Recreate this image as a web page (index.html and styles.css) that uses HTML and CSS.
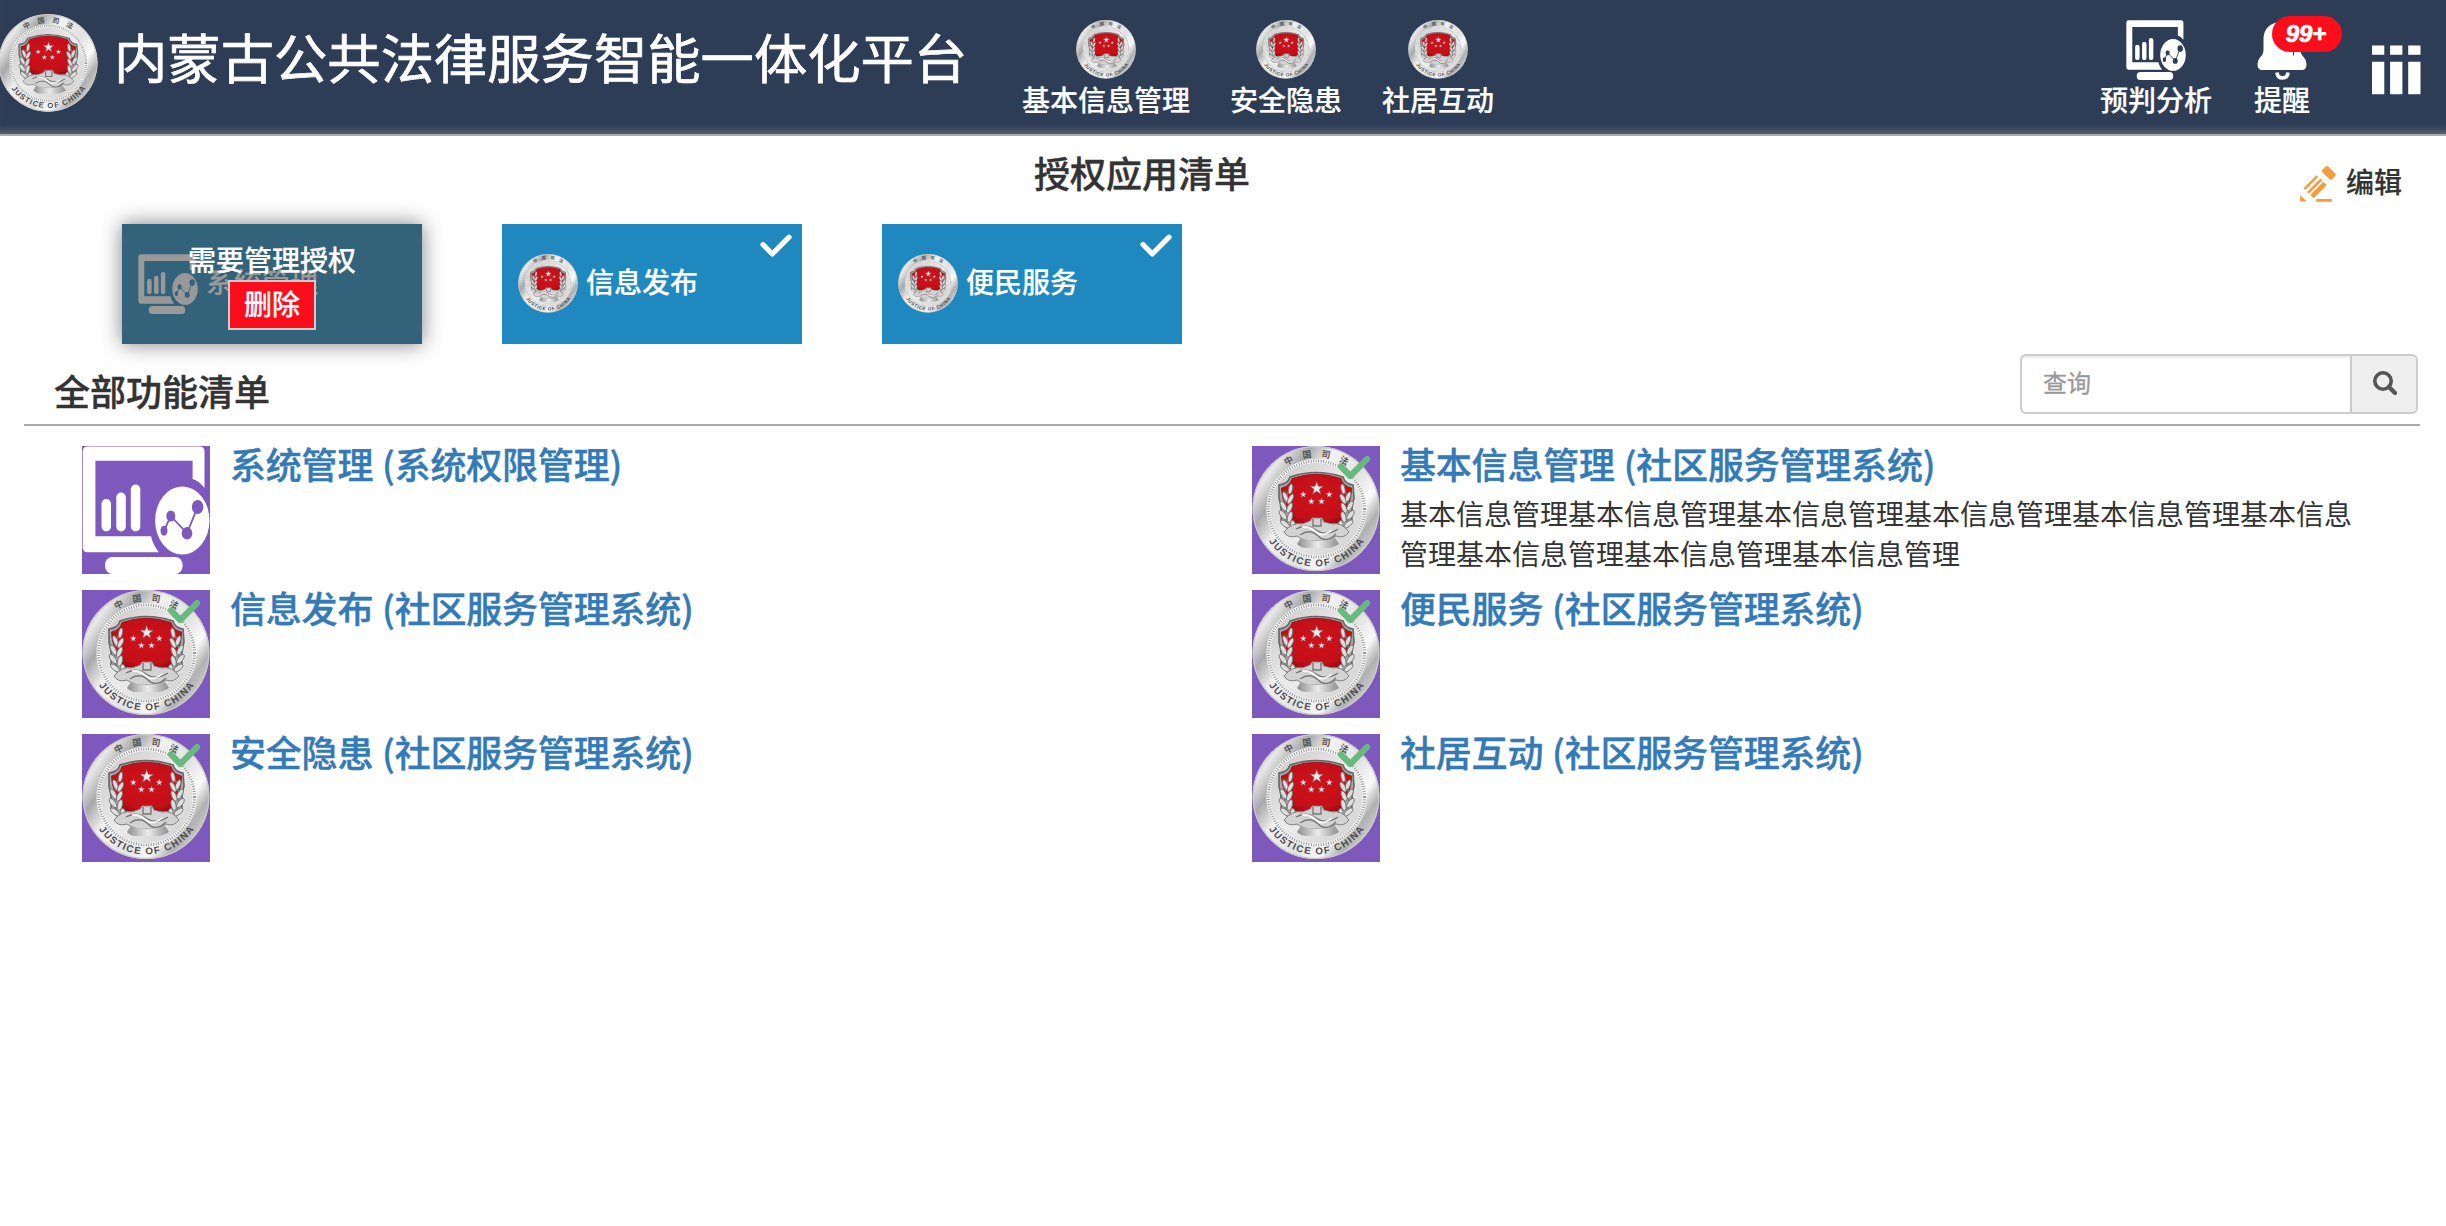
FILE: index.html
```html
<!DOCTYPE html>
<html lang="zh-CN">
<head>
<meta charset="utf-8">
<title>内蒙古公共法律服务智能一体化平台</title>
<link rel="stylesheet" href="styles.css">
</head>
<body>
<svg class="defs" width="0" height="0" aria-hidden="true">
  <defs>
    <linearGradient id="metal" x1="0" y1="0.15" x2="1" y2="0.85">
      <stop offset="0" stop-color="#b5b5b5"/><stop offset=".12" stop-color="#e8e8e8"/>
      <stop offset=".24" stop-color="#a9a9a9"/><stop offset=".38" stop-color="#f1f1f1"/>
      <stop offset=".6" stop-color="#e2e2e2"/><stop offset=".74" stop-color="#fafafa"/>
      <stop offset=".84" stop-color="#b0b0b0"/><stop offset="1" stop-color="#e6e6e6"/>
    </linearGradient>
    <linearGradient id="plate" x1="0" y1="0" x2="1" y2="1">
      <stop offset="0" stop-color="#c4c4c4"/><stop offset=".5" stop-color="#ececec"/><stop offset="1" stop-color="#cdcdcd"/>
    </linearGradient>
    <linearGradient id="banner" x1="0" y1="0" x2="1" y2="0">
      <stop offset="0" stop-color="#8c8c8c"/><stop offset=".5" stop-color="#ececec"/><stop offset="1" stop-color="#8c8c8c"/>
    </linearGradient>
    <radialGradient id="red" cx=".5" cy=".45" r=".65">
      <stop offset="0" stop-color="#cf121c"/><stop offset=".75" stop-color="#c40f18"/><stop offset="1" stop-color="#8d0a10"/>
    </radialGradient>
    <path id="ring-text" d="M7 63A57.5 57.5 0 0 0 122 63"/>
    <path id="star" d="M0-1 .235-.324.951-.309.38.124.588.809 0 .4-.588.809-.38.124-.951-.309-.235-.324Z"/>
    <g id="wheat">
      <path d="M38 85Q27 64 38 42" fill="none" stroke="#777" stroke-width="1.500"/>
      <g fill="#dedede" stroke="#6c6c6c" stroke-width=".8">
        <ellipse cx="38.500" cy="43" rx="2" ry="5" transform="rotate(10 38.500 43)"/>
        <ellipse cx="33.500" cy="51" rx="2.200" ry="5.500" transform="rotate(-22 33.500 51)"/>
        <ellipse cx="38.500" cy="53" rx="2.200" ry="5.500" transform="rotate(28 38.500 53)"/>
        <ellipse cx="31.500" cy="60" rx="2.300" ry="5.500" transform="rotate(-30 31.500 60)"/>
        <ellipse cx="37.500" cy="62" rx="2.300" ry="5.500" transform="rotate(24 37.500 62)"/>
        <ellipse cx="31" cy="69" rx="2.400" ry="5.500" transform="rotate(-38 31 69)"/>
        <ellipse cx="38" cy="71" rx="2.400" ry="5.500" transform="rotate(14 38 71)"/>
        <ellipse cx="33" cy="78" rx="2.400" ry="5.500" transform="rotate(-50 33 78)"/>
        <ellipse cx="41" cy="79" rx="2.400" ry="4.500" transform="rotate(-5 41 79)"/>
      </g>
    </g>
    <symbol id="emblem" viewBox="0 0 128 128">
      <ellipse cx="64" cy="62.500" rx="63.500" ry="62.500" fill="url(#metal)"/>
      <ellipse cx="64" cy="62.500" rx="62.800" ry="61.800" fill="none" stroke="#c9c9c9" stroke-width="1.200"/>
      <circle cx="64.500" cy="63" r="48" fill="url(#plate)"/>
      <circle cx="64.500" cy="63" r="48" fill="none" stroke="#f7f7f7" stroke-width="4"/>
      <circle cx="64.500" cy="63" r="48" fill="none" stroke="#9a9a9a" stroke-width="3" stroke-dasharray="1 1.500"/>
      <path d="M38 31Q64 22 91 31Q93 38 101 39L102 52Q99 62 100 75L92 84H37L29 75Q30 62 27 52L27 39Q36 38 38 31Z" fill="#a9a9a9" stroke="#666" stroke-width="1.600"/>
      <path d="M40 32.500Q64 24 89 32.500Q91 40 99.500 42Q99.500 52 96 60Q92 70 89 77H41Q39 68 34 60Q29.500 52 29.500 42Q38 40 40 32.500Z" fill="url(#red)" stroke="#8e1016" stroke-width=".8"/>
      <g fill="#ececec" stroke="#8f5555" stroke-width=".1">
        <use href="#star" transform="translate(64.700 42.500) scale(7)"/>
        <use href="#star" transform="translate(51.300 48.500) scale(3.500)"/>
        <use href="#star" transform="translate(77.300 48.500) scale(3.500)"/>
        <use href="#star" transform="translate(59.300 55.500) scale(3.500)"/>
        <use href="#star" transform="translate(69.500 55.500) scale(3.500)"/>
      </g>
      <use href="#wheat"/>
      <use href="#wheat" transform="translate(129.500 0) scale(-1 1)"/>
      <path d="M32 86Q40 76 50 78L58 75 60 72H70L72 76 80 78Q90 76 97 86Q92 93 84 90L76 95H53L45 90Q36 93 32 86Z" fill="#d2d2d2" stroke="#828282" stroke-width="1"/>
      <path d="M44 83Q54 77 64 84T86 83M48 89Q58 82 66 90T84 88M61 73V80H69V73" fill="none" stroke="#777" stroke-width="1.400"/>
      <path d="M50 81Q58 80 64 86T80 84" fill="none" stroke="#fff" stroke-width="1.600"/>
      <path d="M49 92Q65 98 83 92L87 98Q80 102 76 102H53Q49 102 45 98Z" fill="url(#banner)"/>
      <g class="emblem-cn">
        <text transform="translate(36.500 14.300) rotate(-27)" y="3.500">中</text>
        <text transform="translate(55 8.300) rotate(-9)" y="3.500">国</text>
        <text transform="translate(74 8.300) rotate(9)" y="3.500">司</text>
        <text transform="translate(92 14.300) rotate(27)" y="3.500">法</text>
      </g>
      <text class="emblem-en"><textPath href="#ring-text" startOffset="50%" textLength="112">JUSTICE OF CHINA</textPath></text>
    </symbol>
    <mask id="dots" maskUnits="userSpaceOnUse" x="0" y="0" width="128" height="128">
      <rect width="128" height="128" fill="#fff"/>
      <path d="M82 84.700 88.800 70 105 87.300 115.600 61" fill="none" stroke="#000" stroke-width="1.800"/>
      <ellipse cx="82" cy="84.700" rx="3.500" ry="5"/><ellipse cx="88.800" cy="70" rx="4.500" ry="5.500"/>
      <ellipse cx="105" cy="87.300" rx="5.300" ry="6.200"/><ellipse cx="115.600" cy="61" rx="5.800" ry="7"/>
    </mask>
    <symbol id="chart" viewBox="0 0 128 128">
      <g fill="currentColor">
        <path d="M5.500.5H117.500Q122.500.5 122.500 5.500V42Q117 35 110.600 33V14.700H13.400V90.300H69Q71 99 77 106.300H5.500Q.7 106.300.7 101V5.500Q.7.500 5.500.5Z"/>
        <rect x="19.500" y="53" width="9.500" height="32.500" rx="4.700"/>
        <rect x="34.300" y="46.500" width="9.500" height="39" rx="4.700"/>
        <rect x="48.800" y="38.500" width="9.500" height="47" rx="4.700"/>
        <rect x="23" y="111" width="77.600" height="17" rx="7.500"/>
        <ellipse cx="100.300" cy="74.500" rx="27.200" ry="34" mask="url(#dots)"/>
      </g>
    </symbol>
    <symbol id="check" viewBox="0 0 32 24">
      <path d="M3 10.500 12.300 20 29 3.200" fill="none" stroke="currentColor" stroke-linecap="round" stroke-linejoin="round"/>
    </symbol>
  </defs>
</svg>

<header class="topbar">
  <svg class="brand-logo"><use href="#emblem"/></svg>
  <h1 class="brand-name">内蒙古公共法律服务智能一体化平台</h1>
  <nav class="nav">
    <a class="nav-item"><svg class="nav-icon"><use href="#emblem"/></svg><span>基本信息管理</span></a>
    <a class="nav-item"><svg class="nav-icon"><use href="#emblem"/></svg><span>安全隐患</span></a>
    <a class="nav-item"><svg class="nav-icon"><use href="#emblem"/></svg><span>社居互动</span></a>
  </nav>
  <div class="tools">
    <a class="nav-item"><svg class="nav-icon"><use href="#chart"/></svg><span>预判分析</span></a>
    <a class="nav-item">
      <svg class="nav-icon" viewBox="0 0 60 60">
        <path d="M30 2C18 2 11.500 9 11.500 19V30Q11.500 34 8 37.500Q5.500 40 5.500 44Q5.500 50 10 50H50Q54.500 50 54.500 44Q54.500 40 52 37.500Q48.500 34 48.500 30V19C48.500 9 42 2 30 2Z" fill="#fff"/>
        <path d="M41.500 28V35.500" stroke="#2c3d55" stroke-width="1"/>
        <path d="M25 52.500Q25.500 58 30.500 58T36 52.500" fill="none" stroke="#fff" stroke-width="3.600"/>
      </svg>
      <span>提醒</span>
      <em class="badge">99+</em>
    </a>
    <a class="menu">
      <svg width="49" height="50" viewBox="0 0 49 50"><path fill="#fff" d="M0 .5H12.300V9.700H0ZM18.100.5H30.400V9.700H18.100ZM36.200.5H48.500V9.700H36.200ZM0 16.800H12.300V49.300H0ZM18.100 16.800H30.400V49.300H18.100ZM36.200 16.800H48.500V49.300H36.200Z"/></svg>
    </a>
  </div>
</header>

<section class="granted-head">
  <h2 class="granted-title">授权应用清单</h2>
  <a class="edit">
    <svg class="edit-icon" viewBox="0 0 36 36">
      <g fill="#f49d3e"><path d="M25.500.6Q27-.6 28.500.8L35 7.300Q36.300 8.800 35 10.200L31.700 13.500Q30.500 14.300 29.500 13.300L22.200 6Q21.200 5 22.200 4Z"/>
      <path d="M.2 29 6.800 35.600H.2Z"/><rect x="16" y="33" width="16" height="2.800" rx=".8"/></g>
      <g stroke="#f49d3e" fill="none"><path d="M17.300 10.200 4.300 23.200M21.300 13.500 8 26.800" stroke-width="2.600"/><path d="M25 17.500 12 30.500" stroke-width="4.800"/></g>
    </svg>
    <span>编辑</span>
  </a>
</section>

<section class="tiles">
  <div class="tile tile-locked">
    <svg class="tile-icon"><use href="#chart"/></svg><span class="tile-name">系统管理</span>
    <div class="overlay"><span>需要管理授权</span><button class="remove" type="button">删除</button></div>
  </div>
  <div class="tile">
    <svg class="tile-icon"><use href="#emblem"/></svg><span class="tile-name">信息发布</span>
    <svg class="check"><use href="#check"/></svg>
  </div>
  <div class="tile">
    <svg class="tile-icon"><use href="#emblem"/></svg><span class="tile-name">便民服务</span>
    <svg class="check"><use href="#check"/></svg>
  </div>
</section>

<section class="all-head">
  <h2 class="all-title">全部功能清单</h2>
  <form class="search">
    <input class="search-input" type="text" placeholder="查询">
    <button class="search-button" type="button" aria-label="查询">
      <svg width="24" height="24" viewBox="0 0 24 24" fill="none" stroke="#555"><circle cx="10" cy="10" r="8.200" stroke-width="3.600"/><path d="M16 16 22 22" stroke-width="4.200" stroke-linecap="round"/></svg>
    </button>
  </form>
</section>

<main class="list">
  <article class="app">
    <div class="app-icon"><svg><use href="#chart"/></svg></div>
    <div class="app-text"><h3>系统管理 (系统权限管理)</h3></div>
  </article>
  <article class="app">
    <div class="app-icon"><svg><use href="#emblem"/></svg><svg class="check"><use href="#check"/></svg></div>
    <div class="app-text"><h3>基本信息管理 (社区服务管理系统)</h3>
      <p>基本信息管理基本信息管理基本信息管理基本信息管理基本信息管理基本信息管理基本信息管理基本信息管理基本信息管理</p></div>
  </article>
  <article class="app">
    <div class="app-icon"><svg><use href="#emblem"/></svg><svg class="check"><use href="#check"/></svg></div>
    <div class="app-text"><h3>信息发布 (社区服务管理系统)</h3></div>
  </article>
  <article class="app">
    <div class="app-icon"><svg><use href="#emblem"/></svg><svg class="check"><use href="#check"/></svg></div>
    <div class="app-text"><h3>便民服务 (社区服务管理系统)</h3></div>
  </article>
  <article class="app">
    <div class="app-icon"><svg><use href="#emblem"/></svg><svg class="check"><use href="#check"/></svg></div>
    <div class="app-text"><h3>安全隐患 (社区服务管理系统)</h3></div>
  </article>
  <article class="app">
    <div class="app-icon"><svg><use href="#emblem"/></svg><svg class="check"><use href="#check"/></svg></div>
    <div class="app-text"><h3>社居互动 (社区服务管理系统)</h3></div>
  </article>
</main>
</body>
</html>
```
FILE: styles.css
```css
* { box-sizing: border-box; }

body {
  margin: 0;
  background: #fff;
  color: #333;
  font-family: "Noto Sans CJK SC", sans-serif;
  font-size: 28px;
  line-height: 40px;
}

h1, h2, h3, p { margin: 0; font-weight: 500; }
h2, h3 { -webkit-text-stroke: .4px currentColor; }
svg { display: block; flex: none; }
.defs { position: absolute; }

.emblem-cn { font: 700 9px "Noto Sans CJK SC", sans-serif; fill: #555; text-anchor: middle; -webkit-text-stroke: 0; }
.emblem-en { font: 700 9.8px "Liberation Sans", sans-serif; fill: #4c4c4c; text-anchor: middle; -webkit-text-stroke: 0; }

/* Top bar */
.topbar {
  display: flex;
  align-items: flex-start;
  height: 136px;
  padding-right: 20px;
  color: #fff;
  background: #2c3d55;
  border-bottom: 2px solid #aaa;
  box-shadow: inset 0 -9px 9px -7px #70747a;
}
.brand-logo { width: 100px; height: 100px; margin: 13.5px 16px 0 -2px; }
.brand-name {
  width: 854px;
  margin-top: 26px;
  font-size: 53.33px;
  font-weight: 400;
  line-height: 60px;
  white-space: nowrap;
  -webkit-text-stroke: .7px #fff;
}
.nav, .tools { display: flex; padding-top: 19px; }
.nav { margin-left: 34px; }
.tools { margin-left: auto; }
.nav-item {
  position: relative;
  display: flex;
  flex-direction: column;
  align-items: center;
  padding: 0 20px;
  font-weight: 500;
}
.nav-item span, .edit span, .tile span, .remove { -webkit-text-stroke: .2px currentColor; }
.nav-icon { width: 60px; height: 60px; margin-top: .5px; margin-bottom: -.5px; }
.badge {
  position: absolute;
  left: 40px;
  top: -3px;
  width: 70px;
  height: 36px;
  border-radius: 18px;
  background: #fc0d1b;
  font: italic 700 24px/35px "Liberation Sans", sans-serif;
  text-align: center;
  text-indent: -2px;
  -webkit-text-stroke: .7px #fff;
}
.menu { margin: 26px 5px 0 40px; }

/* Granted applications */
.granted-head { display: flex; height: 88px; }
.granted-title { flex: 1; padding-top: 11px; font-size: 36px; line-height: 50px; text-align: center; }
.edit { display: flex; gap: 10px; padding: 25px 44px 0 16px; font-weight: 500; }
.edit-icon { width: 36px; height: 36px; margin-top: 5px; }

.tiles { display: flex; gap: 80px; padding-left: 122px; }
.tile {
  position: relative;
  display: flex;
  gap: 8px;
  width: 300px;
  height: 120px;
  padding: 30px 16px;
  color: #fff;
  background: #1f89bf;
  font-weight: 500;
}
.tile-icon { width: 60px; height: 60px; }
.tile-name { margin-top: 7px; }
.tile-locked { color: #999; background: #32637b; box-shadow: 0 0 20px rgba(0, 0, 0, .5); }
.overlay {
  position: absolute;
  inset: 0;
  display: flex;
  flex-direction: column;
  align-items: center;
  padding-top: 15px;
  color: #fff;
}
.remove {
  width: 88px;
  height: 50px;
  margin-top: 1px;
  padding: 0 0 5px;
  border: 2px solid #ccc;
  background: #fc0d1b;
  color: #fff;
  font: 500 28px/40px "Noto Sans CJK SC", sans-serif;
}
.check { position: absolute; top: 10px; right: 10px; width: 32px; height: 24px; stroke-width: 5.2px; }

/* All functions */
.all-head {
  display: flex;
  justify-content: space-between;
  height: 82px;
  margin: 0 26px 20px 24px;
  padding: 10px 2px 0 30px;
  border-bottom: 2px solid #aaa;
}
.all-title { margin-top: 11px; font-size: 36px; line-height: 50px; }
.search { display: flex; width: 398px; height: 60px; }
.search-input {
  flex: 1;
  min-width: 0;
  padding: 0 20px 5px 21px;
  border: 2px solid #ccc;
  border-right: 0;
  border-radius: 6px 0 0 6px;
  box-shadow: inset 0 2px 2px rgba(0, 0, 0, .075);
  font: 400 24px "Noto Sans CJK SC", sans-serif;
}
.search-input::placeholder { color: #999; -webkit-text-stroke: .3px #999; }
.search-button {
  display: grid;
  place-items: center;
  width: 68px;
  padding: 0 0 3px 1px;
  border: 2px solid #ccc;
  border-radius: 0 6px 6px 0;
  background: #eee;
}

.list { display: grid; grid-template-columns: 1fr 1fr; row-gap: 16px; padding: 0 24px 0 82px; }
.app { display: flex; gap: 20px; height: 128px; }
.app-icon { position: relative; flex: none; width: 128px; height: 128px; background: #7d59be; color: #fff; }
.app-icon > svg:first-child { width: 128px; height: 128px; }
.app-icon .check { color: #67b97c; stroke-width: 6.2px; }
.app-text { flex: 1; padding-right: 50px; }
.app-text h3 {
  margin-bottom: 13px;
  color: #337ab7;
  font-size: 36px;
  line-height: 34px;
  letter-spacing: -.2px;
  word-spacing: 1px;
}
.app-text p { font-weight: 400; line-height: 40px; }
```
